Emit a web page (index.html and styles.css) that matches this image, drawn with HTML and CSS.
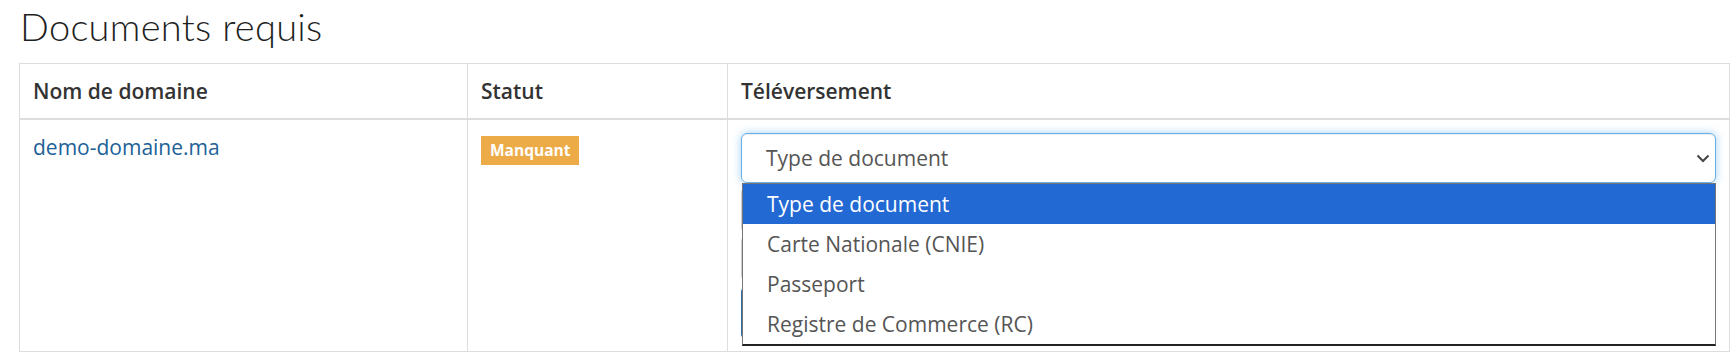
FILE: index.html
```html
<!DOCTYPE html>
<html lang="fr">
<head>
<meta charset="utf-8">
<title>Documents requis</title>
<link rel="stylesheet" href="styles.css">
</head>
<body>
<div class="page">
  <h3 class="title">Documents requis</h3>
  <table class="docs">
    <colgroup><col class="c1"><col class="c2"><col class="c3"></colgroup>
    <thead>
      <tr><th>Nom de domaine</th><th>Statut</th><th>Téléversement</th></tr>
    </thead>
    <tbody>
      <tr>
        <td><a class="domain" href="#">demo-domaine.ma</a></td>
        <td><span class="badge">Manquant</span></td>
        <td>
          <div class="stack">
            <div class="select">
              <span>Type de document</span>
              <svg class="chev" width="14" height="9" viewBox="0 0 14 9"><path d="M1.5 1.5 L7 7 L12.5 1.5" fill="none" stroke="#444" stroke-width="2"/></svg>
            </div>
            <div class="filebox"></div>
            <div class="filebox second"></div>
            <div class="btn"></div>
            <ul class="menu">
              <li class="active">Type de document</li>
              <li>Carte Nationale (CNIE)</li>
              <li>Passeport</li>
              <li>Registre de Commerce (RC)</li>
            </ul>
          </div>
        </td>
      </tr>
    </tbody>
  </table>
</div>
</body>
</html>
```
FILE: styles.css
```css
html, body {
  margin: 0;
  background: #fff;
}
body {
  font-family: "Open Sans", "Liberation Sans", sans-serif;
  color: #333;
}
.page {
  padding: 0 7px 0 19px;
}
.title {
  margin: 0 0 12px 0;
  padding-top: 1px;
  font-family: Lato, "Open Sans", sans-serif;
  font-weight: 300;
  font-size: 38px;
  letter-spacing: 0.3px;
  line-height: 50px;
  color: #1f1f1f;
  padding-left: 1px;
}
.docs {
  border-collapse: collapse;
  width: 1710px;
  table-layout: fixed;
}
.c1 { width: 448px; }
.c2 { width: 260px; }
.c3 { width: 1002px; }
.docs th, .docs td {
  border: 1px solid #ddd;
  text-align: left;
  vertical-align: top;
  font-size: 21px;
  line-height: 29px;
}
.docs th {
  padding: 13px 13px 12px;
  font-weight: 600;
  color: #333;
  border-bottom: 2px solid #ddd;
}
.docs td {
  padding: 13px 13px 13px;
}
.domain {
  color: #216198;
  text-decoration: none;
}
.badge {
  display: inline-block;
  margin-top: 3px;
  height: 29px;
  line-height: 29px;
  padding: 0 9px;
  background: #ecab46;
  color: #fff;
  font-weight: 700;
  font-size: 15.5px;
  vertical-align: top;
}
.stack {
  position: relative;
  display: flex;
  flex-direction: column;
}
.select {
  box-sizing: border-box;
  height: 50px;
  border: 1px solid #66afe9;
  border-radius: 6px;
  box-shadow: inset 0 1px 1px rgba(0,0,0,.075), 0 0 8px rgba(102,175,233,.6);
  display: flex;
  align-items: center;
  justify-content: space-between;
  padding: 0 5px 0 24px;
  color: #555;
  font-size: 21px;
}
.chev {
  display: block;
  margin-top: 1px;
}
.filebox {
  box-sizing: border-box;
  margin-top: 5px;
  height: 44px;
  border: 1px solid #ccc;
  border-radius: 4px;
}
.filebox.second {
  height: 43px;
}
.btn {
  margin-top: 8px;
  height: 50px;
  background: #2e6da4;
  border-radius: 4px;
}
.menu {
  position: absolute;
  top: 50px;
  left: 1px;
  right: 0;
  margin: 0;
  padding: 0;
  list-style: none;
  background: #fff;
  border: 1px solid #767676;
  border-bottom: 2px solid #222;
}
.menu li {
  height: 40px;
  line-height: 40px;
  padding-left: 24px;
  font-size: 21px;
  color: #555;
}
.menu li.active {
  background: #2369d3;
  color: #fff;
}
```
